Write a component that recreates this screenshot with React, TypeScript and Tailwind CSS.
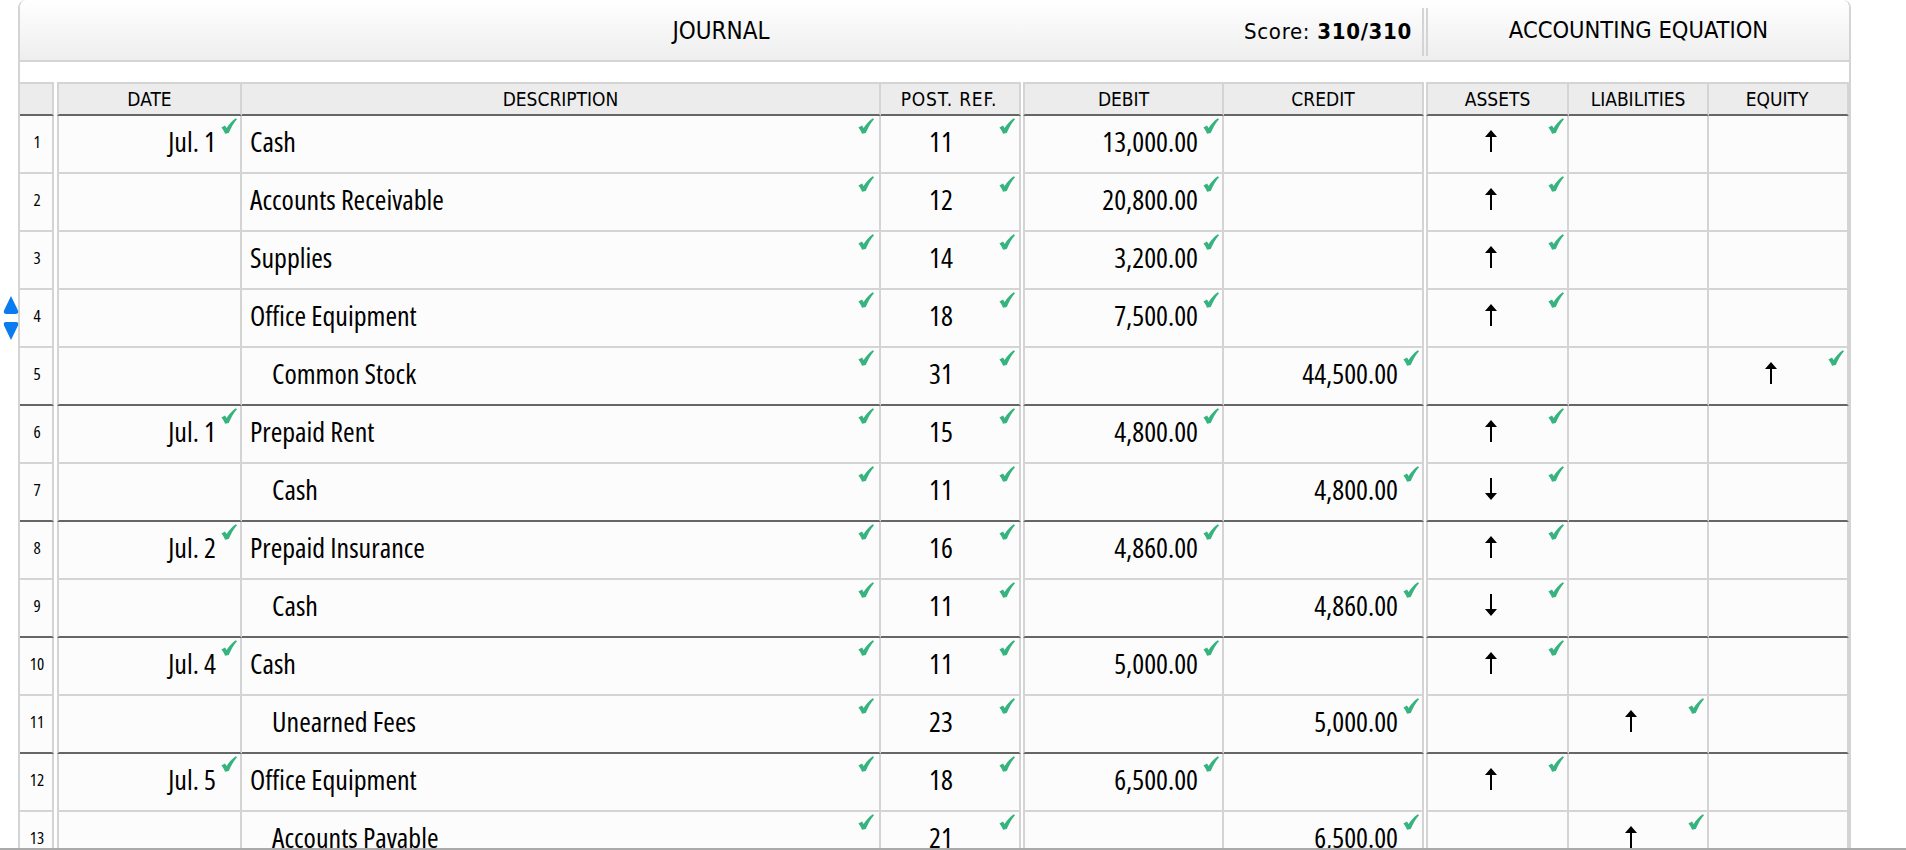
const narrow = "font-['Open_Sans',sans-serif] [font-stretch:75%]";
const condensed = "font-['DejaVu_Sans_Condensed','DejaVu_Sans',sans-serif]";

type Row = {
  date?: string;
  desc: string;
  indent?: boolean;
  ref: string;
  debit?: string;
  credit?: string;
  col: "assets" | "liab" | "equity";
  down?: boolean;
  end?: boolean;
};

const rows: Row[] = [
  { date: "Jul. 1", desc: "Cash", ref: "11", debit: "13,000.00", col: "assets" },
  { desc: "Accounts Receivable", ref: "12", debit: "20,800.00", col: "assets" },
  { desc: "Supplies", ref: "14", debit: "3,200.00", col: "assets" },
  { desc: "Office Equipment", ref: "18", debit: "7,500.00", col: "assets" },
  { desc: "Common Stock", indent: true, ref: "31", credit: "44,500.00", col: "equity", end: true },
  { date: "Jul. 1", desc: "Prepaid Rent", ref: "15", debit: "4,800.00", col: "assets" },
  { desc: "Cash", indent: true, ref: "11", credit: "4,800.00", col: "assets", down: true, end: true },
  { date: "Jul. 2", desc: "Prepaid Insurance", ref: "16", debit: "4,860.00", col: "assets" },
  { desc: "Cash", indent: true, ref: "11", credit: "4,860.00", col: "assets", down: true, end: true },
  { date: "Jul. 4", desc: "Cash", ref: "11", debit: "5,000.00", col: "assets" },
  { desc: "Unearned Fees", indent: true, ref: "23", credit: "5,000.00", col: "liab", end: true },
  { date: "Jul. 5", desc: "Office Equipment", ref: "18", debit: "6,500.00", col: "assets" },
  { desc: "Accounts Payable", indent: true, ref: "21", credit: "6,500.00", col: "liab", end: true },
];

const Check = ({ right = "right-[3px]" }: { right?: string }) => (
  <svg viewBox="0 0 16 16" className={`absolute top-[2px] h-[16px] w-[16px] ${right}`}>
    <path d="M0.4 9.4 L4 7.6 L5.6 10 C8 6.2 11 2.8 14.8 0.2 L16 1.2 C12.6 5.2 10 9.6 7.8 15 L4 15.8 C3.2 13.2 2 11.2 0.4 9.4 Z" fill="#36b37e" />
  </svg>
);

const Arrow = ({ down }: { down?: boolean }) => (
  <svg viewBox="0 0 14 22" className={`h-[22px] w-[14px] ${down ? "rotate-180" : ""}`}>
    <path d="M6 22 V7 H1 L7 0 L13 7 H8 V22 Z" fill="#000" />
  </svg>
);

const JournalRow = ({ row, n }: { row: Row; n: number }) => {
  const line = row.end ? "border-b-[#666]" : "border-b-[#d4d4d4]";
  const cell = `relative h-[58px] shrink-0 border-b-2 border-r-2 border-r-[#d4d4d4] bg-[#fcfcfc] flex items-center pb-[6px] ${line}`;
  const amount = "justify-end pr-[24px]";
  const eq = "justify-center pr-[14px]";
  return (
    <div className={`flex text-[28px] leading-none text-black ${narrow}`}>
      <div className={`${cell} w-[34px] justify-center pb-0 pl-[2px] text-[17px]`}>{n}</div>
      <div className="w-[3px] shrink-0" />
      <div className={`${cell} w-[185px] border-l-2 border-l-[#d4d4d4] ${amount}`}>
        {row.date}
        {row.date && <Check />}
      </div>
      <div className={`${cell} w-[639px] ${row.indent ? "pl-[30px]" : "pl-[8px]"}`}>
        {row.desc}
        <Check right="right-[5px]" />
      </div>
      <div className={`${cell} w-[140px] justify-center pr-[18px]`}>
        {row.ref}
        <Check right="right-[4px]" />
      </div>
      <div className="w-[2px] shrink-0" />
      <div className={`${cell} w-[201px] border-l-2 border-l-[#d4d4d4] ${amount}`}>
        {row.debit}
        {row.debit && <Check />}
      </div>
      <div className={`${cell} w-[200px] ${amount}`}>
        {row.credit}
        {row.credit && <Check />}
      </div>
      <div className="w-[2px] shrink-0" />
      <div className={`${cell} w-[143px] border-l-2 border-l-[#d4d4d4] ${eq}`}>
        {row.col === "assets" && <Arrow down={row.down} />}
        {row.col === "assets" && <Check />}
      </div>
      <div className={`${cell} w-[140px] ${eq}`}>
        {row.col === "liab" && <Arrow />}
        {row.col === "liab" && <Check />}
      </div>
      <div className={`${cell} w-[140px] ${eq}`}>
        {row.col === "equity" && <Arrow />}
        {row.col === "equity" && <Check />}
      </div>
    </div>
  );
};

const HeaderCell = ({ w, label, left, extra }: { w: string; label?: string; left?: boolean; extra?: string }) => (
  <div
    className={`flex h-[34px] shrink-0 items-center justify-center border-y-2 border-r-2 border-y-[#d4d4d4] border-r-[#d4d4d4] border-b-[#666] bg-[#ececec] text-[19px] text-black ${w} ${left ? "border-l-2 border-l-[#d4d4d4]" : ""} ${extra ?? ""}`}
  >
    {label}
  </div>
);

export default function App() {
  return (
    <div className="relative h-[850px] w-[1906px] overflow-hidden border-b-2 border-[#aaa] bg-white">
      <div className="absolute left-[3px] top-[295px] flex flex-col gap-[6px]">
        <svg viewBox="0 0 16 18" preserveAspectRatio="none" className="h-[20px] w-[16px]">
          <path d="M8 1 L15 14 Q16 17 13 17 H3 Q0 17 1 14 Z" fill="#0a7cf0" />
        </svg>
        <svg viewBox="0 0 16 18" preserveAspectRatio="none" className="h-[20px] w-[16px] rotate-180">
          <path d="M8 1 L15 14 Q16 17 13 17 H3 Q0 17 1 14 Z" fill="#0a7cf0" />
        </svg>
      </div>
      <div className="ml-[18px] w-[1833px] rounded-t-lg border-x-2 border-[#d4d4d4]">
        <div className={`flex h-[62px] rounded-t-lg border-b-2 border-[#d4d4d4] bg-gradient-to-b from-white to-[#eeeeee] text-black ${condensed}`}>
          <div className="relative flex w-[1402px] items-center justify-center pt-[2px] text-[24px]">
            JOURNAL
            <div className="absolute right-[10px] top-0 flex h-full items-center pt-[2px] text-[22px] tracking-[0.7px]">
              Score:&nbsp;<span className="font-bold">310/310</span>
            </div>
          </div>
          <div className="mt-[8px] mb-[4px] h-[48px] w-[6px] border-x-2 border-[#d4d4d4]" />
          <div className="flex w-[421px] items-center justify-center pt-[2px] text-[23.5px]">ACCOUNTING EQUATION</div>
        </div>
        <div className="h-[20px]" />
        <div className={`flex ${condensed}`}>
          <HeaderCell w="w-[34px]" />
          <div className="w-[3px] shrink-0" />
          <HeaderCell w="w-[185px]" label="DATE" left />
          <HeaderCell w="w-[639px]" label="DESCRIPTION" />
          <HeaderCell w="w-[140px]" label="POST. REF." extra="pr-[2px] tracking-[0.8px]" />
          <div className="w-[2px] shrink-0" />
          <HeaderCell w="w-[201px]" label="DEBIT" left />
          <HeaderCell w="w-[200px]" label="CREDIT" />
          <div className="w-[2px] shrink-0" />
          <HeaderCell w="w-[143px]" label="ASSETS" left />
          <HeaderCell w="w-[140px]" label="LIABILITIES" />
          <HeaderCell w="w-[140px]" label="EQUITY" extra="pr-[2px]" />
        </div>
        {rows.map((row, i) => (
          <JournalRow key={i} row={row} n={i + 1} />
        ))}
      </div>
    </div>
  );
}
